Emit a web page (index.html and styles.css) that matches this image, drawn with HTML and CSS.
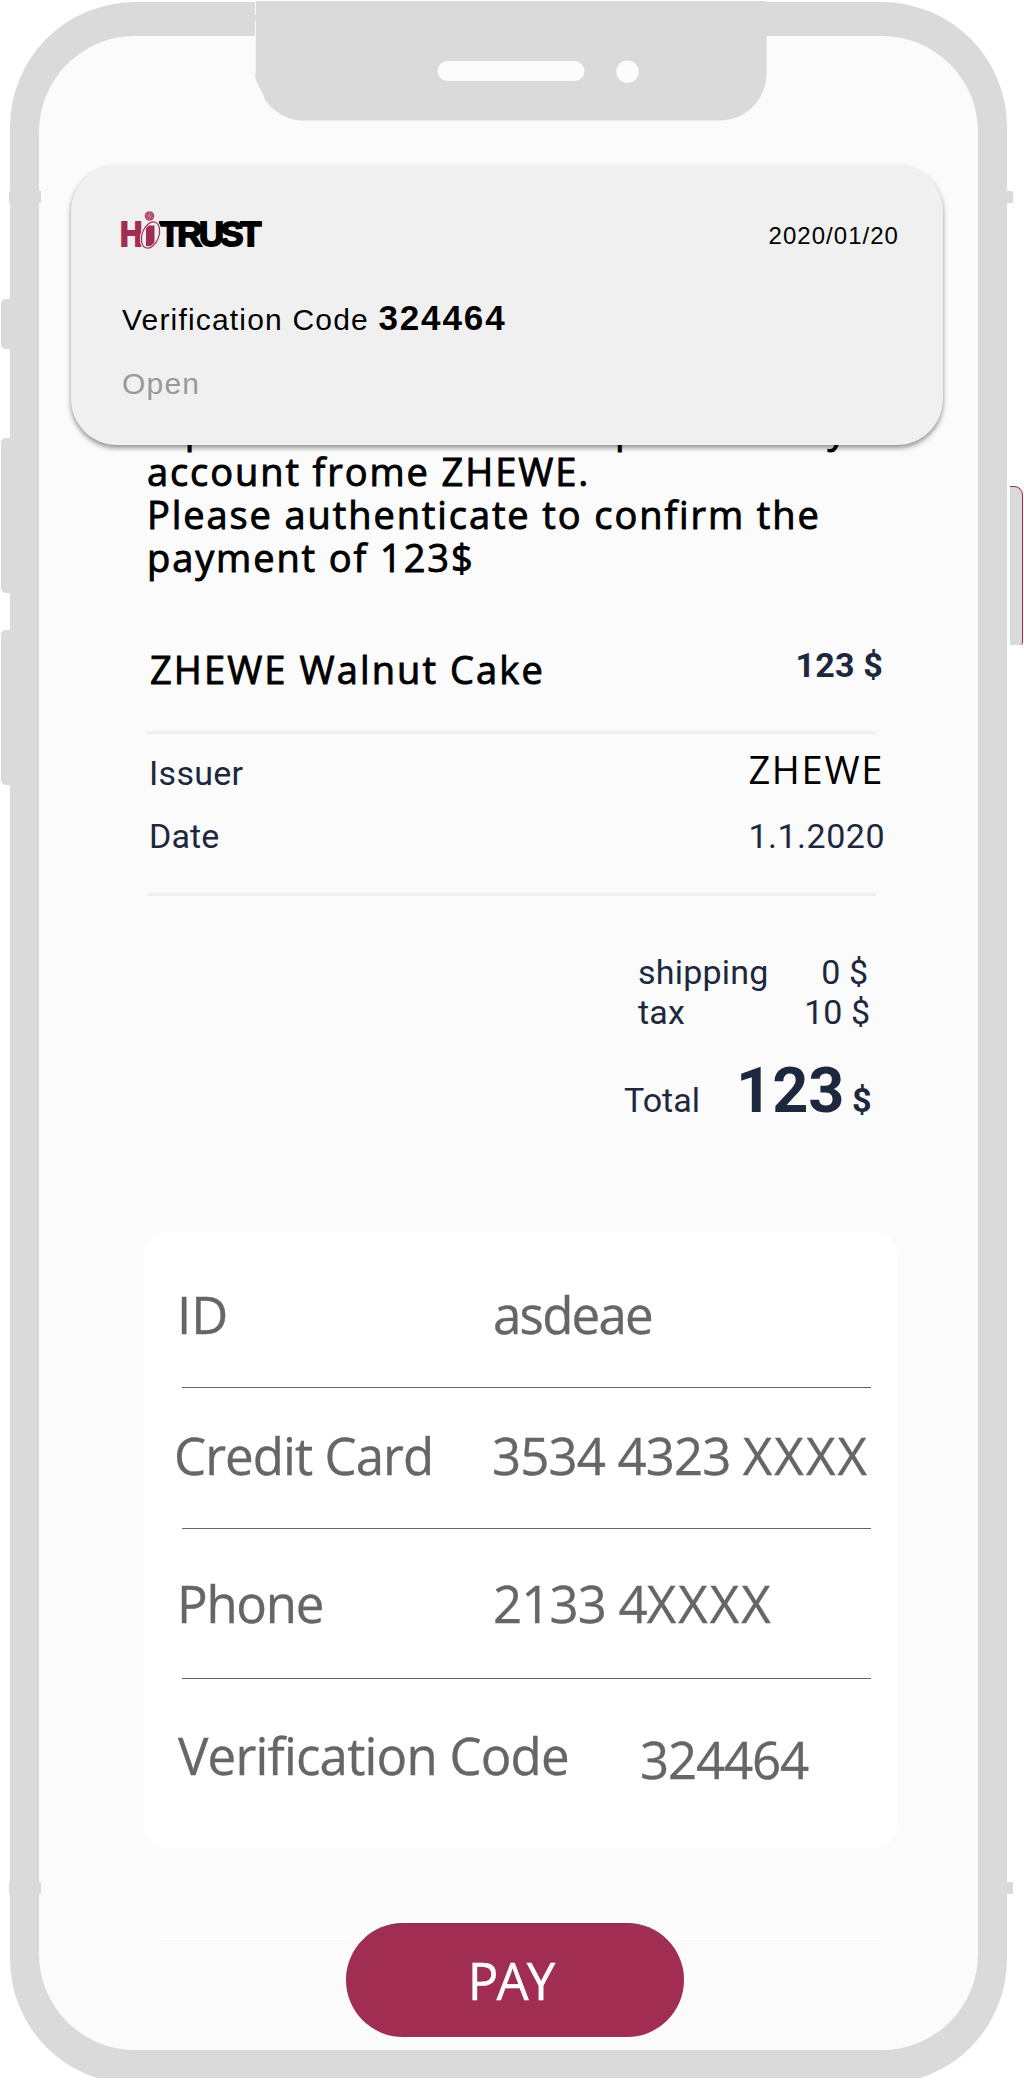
FILE: index.html
```html
<!DOCTYPE html>
<html lang="en">
<head>
<meta charset="utf-8">
<title>HiTRUST payment</title>
<link rel="stylesheet" href="styles.css">
</head>
<body>
<div class="device">
  <div class="phone">
    <div class="shell">
      <main class="screen">
        <p class="message"><span class="lead">A purchase has been</span><span class="lead-end">put on my</span><br>account frome ZHEWE.<br>Please authenticate to confirm the<br>payment of 123$</p>

        <div class="product">
          <h1 class="product-name">ZHEWE Walnut Cake</h1>
          <span class="product-price">123 $</span>
        </div>

        <dl class="details">
          <div class="detail"><dt>Issuer</dt><dd class="issuer">ZHEWE</dd></div>
          <div class="detail"><dt class="date-label">Date</dt><dd class="date">1.1.2020</dd></div>
        </dl>

        <div class="costs">
          <div class="cost"><span>shipping</span><span class="cost-zero">0 $</span></div>
          <div class="cost"><span class="cost-tax">tax</span><span>10 $</span></div>
          <div class="total"><span class="total-label">Total</span><strong class="total-sum">123</strong><strong class="total-unit">$</strong></div>
        </div>

        <section class="card">
          <div class="field"><span class="label">ID</span><span class="value v-id">asdeae</span></div>
          <div class="field field-card"><span class="label label-card">Credit Card</span><span class="value v-card">3534 4323 <span class="mask">XXXX</span></span></div>
          <div class="field field-phone"><span class="label label-phone">Phone</span><span class="value v-phone">2133 4<span class="mask">XXXX</span></span></div>
          <div class="field field-code"><span class="label label-code">Verification Code</span><span class="value v-code">324464</span></div>
        </section>

        <div class="footer">
          <button class="pay" type="button">PAY</button>
        </div>
      </main>
    </div>
  </div>

  <svg class="notch" width="512" height="121" viewBox="0 0 512 121" aria-hidden="true">
    <path d="M0 1H511.500V73A47 47 0 0 1 464 120.500H46C32 120 18 111 10 100C9 92 0 84 0 73Z" fill="#dadada"/>
    <path d="M.3 1V15M.3 21V73" stroke="#fbfbfb" stroke-width="1.200"/>
    <rect x="182.500" y="61" width="147" height="20" rx="10" fill="#fcfcfc"/>
    <circle cx="372.500" cy="71.700" r="11.200" fill="#fcfcfc"/>
  </svg>

  <i class="key mute"></i>
  <i class="key vol-up"></i>
  <i class="key vol-down"></i>
  <i class="power"></i>
  <i class="band band-tl"></i>
  <i class="band band-tr"></i>
  <i class="band band-bl"></i>
  <i class="band band-br"></i>

  <aside class="notice">
    <header class="notice-head">
      <svg class="logo" width="144" height="40" viewBox="0 0 144 40" role="img" aria-label="HiTRUST">
        <text x="-1" y="35.500" class="logo-hi" textLength="22.500" lengthAdjust="spacingAndGlyphs">H</text>
        <text x="38.500" y="35.500" class="logo-trust">TRUST</text>
        <ellipse cx="29.500" cy="25" rx="8.400" ry="13.600" transform="rotate(20 29.500 25)" fill="#f0f0f0" stroke="#f0f0f0" stroke-width="3"/>
        <rect x="25" y="15.500" width="8.500" height="20.500" fill="#a12d53"/>
        <ellipse cx="29.500" cy="25" rx="8.400" ry="13.600" transform="rotate(20 29.500 25)" fill="none" stroke="#f0f0f0" stroke-width="2.600"/>
        <ellipse cx="29.500" cy="25" rx="8.400" ry="13.600" transform="rotate(20 29.500 25)" fill="none" stroke="#a12d53" stroke-width="1.200"/>
        <circle cx="28.500" cy="6" r="4.800" fill="#b04a6c"/>
        <path d="M25 4l7 4M25.500 8.500l6-5M28.500 1.500v9" stroke="#c98aa0" stroke-width=".6"/>
      </svg>
      <time class="notice-date">2020/01/20</time>
    </header>
    <p class="notice-text">Verification Code <b>324464</b></p>
    <a class="notice-open">Open</a>
  </aside>
</div>
</body>
</html>
```
FILE: styles.css
```css
* { box-sizing: border-box; }

body {
  margin: 0;
  background: #fff;
  color: #000;
  font-family: "Open Sans", "Noto Sans", sans-serif;
}

p, h1, dl, dd { margin: 0; }

.device {
  position: relative;
  width: 1024px;
  height: 2091px;
  padding: 2px 0 0 10px;
  overflow: hidden;
}

/* Phone body: the lower edge of the shell is cut flat */
.phone {
  width: 997px;
  height: 2076px;
  overflow: hidden;
}

.shell {
  height: 2082px;
  padding: 34px 29px 33px;
  border-radius: 125px;
  background: #dadada;
}

.screen {
  display: flex;
  flex-direction: column;
  width: 938.5px;
  height: 2014px;
  padding: 371px 0 0 108px;
  border-radius: 96px;
  background: #fbfbfb;
}

/* Message */
.message {
  height: 171px;
  font-size: 38px;
  line-height: 43px;
  letter-spacing: 1.9px;
  white-space: nowrap;
  -webkit-text-stroke: .9px #000;
}

.lead { display: inline-block; width: 468px; }
.lead-end { word-spacing: 18px; }

/* Product */
.product {
  display: flex;
  justify-content: space-between;
  align-items: flex-start;
  width: 736px;
  height: 153px;
  padding: 70px 0 0 3px;
}

.product-name {
  font-size: 38px;
  font-weight: 400;
  line-height: 43px;
  letter-spacing: 2.1px;
  -webkit-text-stroke: .9px #000;
}

.product-price {
  margin: -3px 0 0 0;
  font: 700 34px/40px Roboto, sans-serif;
  letter-spacing: .2px;
  color: #1d283e;
}

/* Details */
.details {
  width: 729px;
  height: 165px;
  border: solid #f0f0f0;
  border-width: 3px 0;
  padding-top: 14px;
  font: 34px/40px Roboto, sans-serif;
  color: #1d283e;
}

.detail {
  display: flex;
  justify-content: space-between;
  align-items: flex-start;
  height: 63px;
  margin-right: -9px;
  padding-left: 2px;
}

.detail dt { margin-top: 5px; letter-spacing: .3px; }
.detail .date-label { letter-spacing: .1px; }
.issuer { margin-right: 1px; font: 38px/43px "Open Sans", sans-serif; letter-spacing: 1.7px; color: #000; }
.date { margin-top: 5px; letter-spacing: .5px; }

/* Costs */
.costs {
  width: 726px;
  height: 336px;
  padding: 56px 0 0 477px;
  font: 34px/40px Roboto, sans-serif;
  color: #1d283e;
}

.cost {
  display: flex;
  justify-content: space-between;
  height: 40px;
  padding: 0 3px 0 14px;
}

.cost span:first-child { letter-spacing: .2px; }
.cost .cost-zero { margin-right: 2px; }
.cost .cost-tax { letter-spacing: -.5px; }

.total {
  display: flex;
  align-items: baseline;
  margin-top: 19px;
  line-height: 80px;
}

.total-label { width: 112px; }
.total-sum { width: 116px; font-size: 63px; }
.total-unit { font-weight: 700; }

/* Card */
.card {
  width: 753px;
  height: 616px;
  margin-left: -3px;
  padding: 0 26px 0 38px;
  border-radius: 24px;
  background: #fff;
  color: #666;
  font-size: 51px;
  line-height: 60px;
  white-space: nowrap;
  -webkit-text-stroke: .35px #666;
}

.field {
  display: flex;
  height: 156px;
  padding-top: 52px;
  border-bottom: 1px solid #666;
}

.field-card { height: 141px; padding-top: 37px; }
.field-phone { height: 150px; padding-top: 44px; }
.field-code { padding-top: 46px; border-bottom: 0; }

.label { width: 311px; margin-left: -5px; }
.label-card { margin-left: -8px; width: 314px; letter-spacing: -.95px; }
.label-phone { letter-spacing: -1.3px; }
.label-code { width: 462px; margin-left: -4px; letter-spacing: -.8px; }

.v-id { margin-left: 5px; letter-spacing: -1.75px; }
.v-card { margin-left: 4px; letter-spacing: -.9px; }
.v-phone { margin-left: 5px; letter-spacing: -.9px; }
.mask { letter-spacing: 2.1px; }
.v-code { margin-top: 4px; letter-spacing: -1.15px; }

/* Footer */
.footer {
  width: 720px;
  margin: 75px 0 0 13px;
  background: linear-gradient(#fff, #fff) 0 15px / 100% 2px no-repeat;
}

.pay {
  display: block;
  width: 338px;
  height: 114px;
  margin-left: 186px;
  padding: 0 9px 2px 0;
  border: 0;
  border-top: 1px solid #7e3355;
  border-radius: 57px;
  background: #a12d53;
  color: #fff;
  font: 51px/106px "Open Sans", sans-serif;
  letter-spacing: -2px;
  -webkit-text-stroke: .35px #fff;
}

/* Parts fixed on the phone's edge */
.notch { position: absolute; left: 255px; top: 0; }

.key {
  position: absolute;
  left: 1px;
  width: 10px;
  border-radius: 5px 0 0 5px;
  background: #dadada;
}

.mute { top: 299px; height: 50px; }
.vol-up { top: 438px; height: 155px; }
.vol-down { top: 630px; height: 155px; }

.power {
  position: absolute;
  left: 1010px;
  top: 486px;
  width: 13px;
  height: 159px;
  border: solid #a12d53;
  border-width: 1px 1px 0 0;
  border-radius: 0 9px 3px 0;
  background: #dadada;
}

.band { position: absolute; width: 32px; height: 12px; background: #dadada; }
.band-tl { left: 9px; top: 191px; }
.band-tr { left: 981px; top: 191px; }
.band-bl { left: 9px; top: 1882px; }
.band-br { left: 981px; top: 1882px; }

/* Notification */
.notice {
  position: absolute;
  left: 71px;
  top: 165px;
  width: 872px;
  height: 280px;
  padding: 44px 44px 0 50px;
  border-radius: 46px;
  background: #f0f0f0;
  box-shadow: 0 3px 5px rgba(0, 0, 0, .42);
  font-family: "Liberation Sans", Arial, sans-serif;
}

.notice-head { display: flex; justify-content: space-between; height: 85px; }
.logo { display: block; margin-top: 1px; overflow: visible; }
.logo-hi, .logo-trust { font: 700 34.500px "Liberation Sans", Arial, sans-serif; stroke-width: 1.8px; }
.logo-hi { fill: #a12d53; stroke: #a12d53; }
.logo-trust { fill: #000; stroke: #000; letter-spacing: -3.300px; }
.notice-date { margin-top: 12px; font-size: 24px; line-height: 30px; letter-spacing: 1.03px; }
.notice-text { height: 75px; padding: 2px 0 0 1px; font-size: 30px; line-height: 48px; letter-spacing: 1.18px; white-space: nowrap; }
.notice-text b { font-size: 35px; letter-spacing: 1.9px; margin-left: 0; line-height: 40px; }
.notice-open { display: block; padding-left: 1px; font-size: 30px; line-height: 30px; letter-spacing: 1.2px; color: #999; }
```
